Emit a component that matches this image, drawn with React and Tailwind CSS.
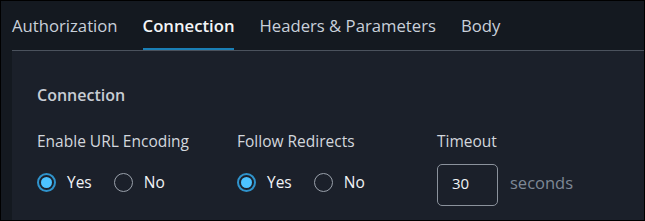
import { useState } from 'react';

const tabs = ['Authorization', 'Connection', 'Headers & Parameters', 'Body'];

const Radio = ({ checked, label, onClick }) => (
  <button onClick={onClick} className="flex items-center gap-[11px]">
    {checked ? (
      <span className="w-[19px] h-[19px] rounded-full border-2 border-[#2f93cc] flex items-center justify-center">
        <span className="w-[11px] h-[11px] rounded-full bg-[#4cc2ff]"></span>
      </span>
    ) : (
      <span className="w-[19px] h-[19px] rounded-full border border-[#9aa1ab]"></span>
    )}
    <span className="text-[15.5px] text-[#f2f4f7]">{label}</span>
  </button>
);

const RadioGroup = ({ label }) => {
  const [value, setValue] = useState('yes');
  return (
    <div className="w-[200px]">
      <div className="text-[15.5px] text-[#d3d7dd] leading-5">{label}</div>
      <div className="flex items-center gap-[22px] mt-[20px]">
        <Radio checked={value === 'yes'} label="Yes" onClick={() => setValue('yes')} />
        <Radio checked={value === 'no'} label="No" onClick={() => setValue('no')} />
      </div>
    </div>
  );
};

export default function App() {
  const [active, setActive] = useState('Connection');

  return (
    <div
      className="w-[645px] h-[221px] border border-black bg-[#141920] flex flex-col overflow-hidden"
      style={{ fontFamily: '"Open Sans", sans-serif' }}
    >
      {/* Tabs */}
      <div className="h-[49px] flex items-end gap-[25px] pl-[11px] shrink-0">
        {tabs.map((tab) => (
          <button
            key={tab}
            onClick={() => setActive(tab)}
            className={
              'h-full flex items-center text-[16.7px] pt-[3px] border-b-2 ' +
              (active === tab
                ? 'font-semibold text-[#f4f6f8] border-[#1a7fb5]'
                : 'text-[#c9d0da] border-transparent')
            }
          >
            {tab}
          </button>
        ))}
      </div>

      {/* Panel */}
      <div className="flex-1 ml-[11px] border-t border-[#4b525d] bg-[#1b202a] pl-[25px] pt-[34px]">
        <h2 className="text-[16px] font-semibold text-[#c8cdd4] leading-5">Connection</h2>
        <div className="flex mt-[26px]">
          <RadioGroup label="Enable URL Encoding" />
          <RadioGroup label="Follow Redirects" />
          <div>
            <div className="text-[15.5px] text-[#d3d7dd] leading-5">Timeout</div>
            <div className="flex items-center gap-[12px] mt-[13px]">
              <input
                defaultValue="30"
                className="w-[61px] h-[42px] rounded-[5px] border border-[#8b929c] bg-transparent text-[15px] text-[#f2f4f7] pl-[14px] pb-[4px] outline-none"
              />
              <span className="text-[16.5px] text-[#7e8896] pb-[4px]">seconds</span>
            </div>
          </div>
        </div>
      </div>
    </div>
  );
}
